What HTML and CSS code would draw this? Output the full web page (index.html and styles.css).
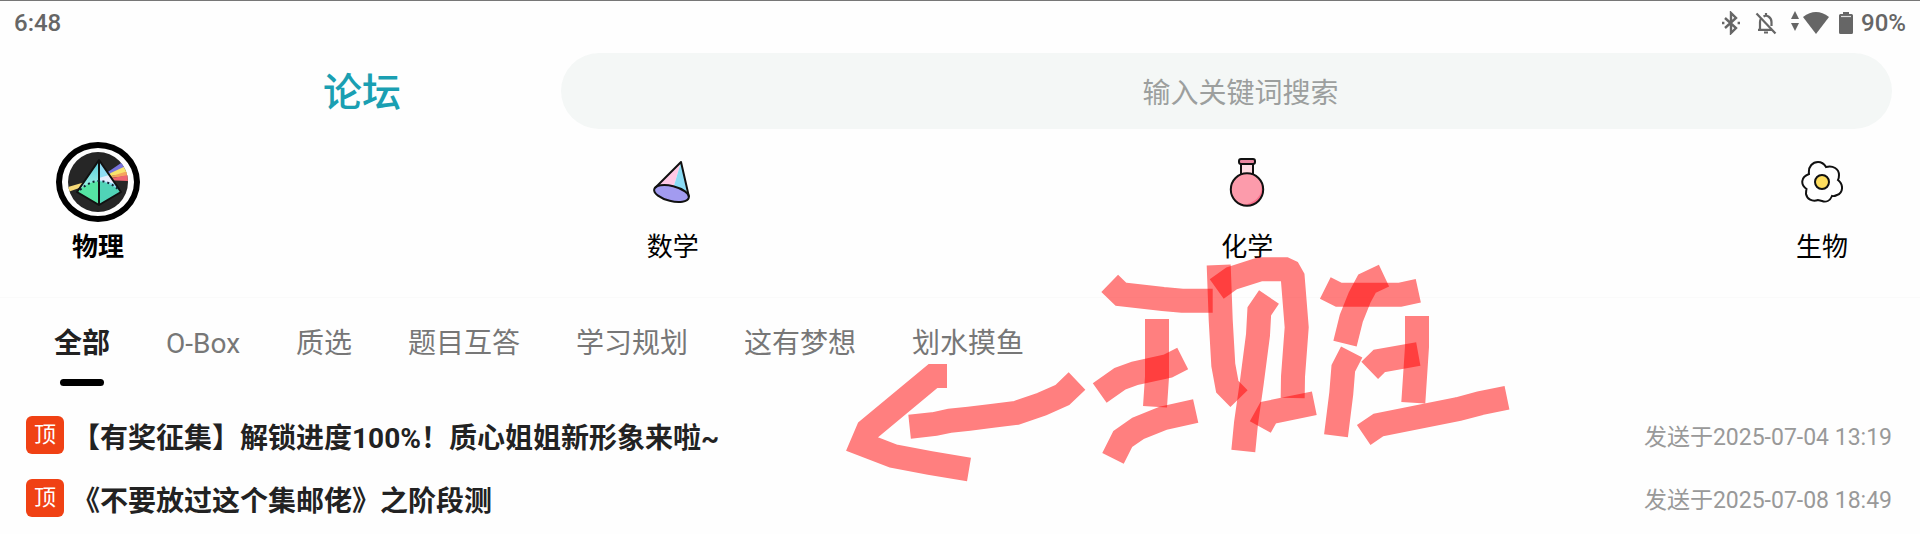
FILE: index.html
```
<!DOCTYPE html>
<html lang="zh-CN">
<head>
    <meta charset="UTF-8">
    <meta name="viewport" content="width=device-width, initial-scale=1.0">
    <title>论坛</title>
    <link rel="stylesheet" href="styles.css">
</head>
<body>
    <!-- Status bar -->
    <div class="status-bar">
        <span class="clock">6:48</span>
        <div class="status-icons">
            <svg class="bluetooth" width="20" height="24" viewBox="0 0 20 24" fill="none" stroke="#666" stroke-width="2.400">
                <path d="M4 7l11 10-5 5V2l5 5L4 17"/>
                <path d="M1 12h2.400M16.600 12H19"/>
            </svg>
            <svg class="bell" width="22" height="24" viewBox="0 0 22 24" fill="none" stroke="#666" stroke-width="2.200">
                <path d="M1.500 2.500l19 20"/>
                <path d="M5 18.500V11q0-2 1-3.500M3 18.800h14M8.500 5.500Q11 4 13.500 5.500q3 1.800 3 5.500v4"/>
                <path d="M11 2v3M9 21.500h4"/>
            </svg>
            <svg class="signal" width="38" height="24" viewBox="0 0 38 24" fill="#666">
                <path d="M4 0l4 8H0zM4 20l4-8H0z"/>
                <path d="M12 6Q25 -4 38 6L25 23z"/>
            </svg>
            <svg class="battery" width="14" height="24" viewBox="0 0 14 24" fill="#666">
                <path d="M4 1h6v2h2.500Q14 3 14 4.500v17q0 1.500-1.500 1.500h-11Q0 23 0 21.500v-17Q0 3 1.500 3H4z"/>
                <path d="M2 5.500h10" stroke="#ddd" stroke-width="1.200"/>
            </svg>
            <span class="battery-level">90%</span>
        </div>
    </div>

    <!-- Title and search -->
    <header class="top">
        <h1>论坛</h1>
        <input class="search" type="text" placeholder="输入关键词搜索" aria-label="输入关键词搜索">
    </header>

    <!-- Subjects -->
    <nav class="subjects">
        <button class="subject active">
            <span class="subject-icon">
                <svg width="60" height="60" viewBox="0 0 60 60">
                    <defs>
                        <clipPath id="disc"><circle cx="30" cy="30" r="30"/></clipPath>
                        <linearGradient id="glass" x1="0" y1="0" x2="0" y2="1">
                            <stop offset="0" stop-color="#55c8d8"/>
                            <stop offset="0.600" stop-color="#9af0e4"/>
                            <stop offset="1" stop-color="#4fdfa8"/>
                        </linearGradient>
                    </defs>
                    <g clip-path="url(#disc)">
                        <rect width="60" height="60" fill="#262626"/>
                        <path d="M0 35l31-9v3L0 40z" fill="#f6d978"/>
                        <path d="M34 24L56 9l4 4v3z" fill="#7773dc"/>
                        <path d="M34 25l26-12v9z" fill="#f8e36c"/>
                        <path d="M34 27l26-8v5z" fill="#f5a45d"/>
                        <path d="M34 28l26-5v6z" fill="#ef6470"/>
                        <path d="M31 8L9 40l22 13 22-13z" fill="url(#glass)"/>
                        <path d="M31 8l22 32q-10-9-22-11z" fill="#8fdcf5"/>
                        <path d="M31 26l10-3 7 9-17-4z" fill="#e8edff"/>
                        <path d="M9 40q10-10 22-11v24z" fill="#55e4a3"/>
                        <path d="M31 29q12 2 22 11L31 53z" fill="#50d3b7"/>
                        <path d="M31 8L9 40l22 13 22-13zM31 8v45" fill="none" stroke="#111" stroke-width="2" stroke-linejoin="round"/>
                        <path d="M12 38q19-18 39 0" fill="none" stroke="#123" stroke-width="2" stroke-dasharray="2 3"/>
                    </g>
                </svg>
            </span>
            <span class="subject-name">物理</span>
        </button>
        <button class="subject">
            <span class="subject-icon">
                <svg width="46" height="48" viewBox="0 0 46 48">
                    <path d="M31 4L7 29q8 0 16 2z" fill="#ffc9e6"/>
                    <path d="M31 4l7 36-15-9z" fill="#8bdcf5"/>
                    <ellipse cx="21.500" cy="35.500" rx="17.800" ry="7.500" transform="rotate(14 21.500 35.500)" fill="#a29bf0" stroke="#111" stroke-width="2"/>
                    <path d="M5 30L31 4l8 35" fill="none" stroke="#111" stroke-width="2" stroke-linejoin="round"/>
                </svg>
            </span>
            <span class="subject-name">数学</span>
        </button>
        <button class="subject">
            <span class="subject-icon">
                <svg width="36" height="50" viewBox="0 0 36 50">
                    <path d="M12 5h12v14H12z" fill="#ffdce3" stroke="#111" stroke-width="2"/>
                    <circle cx="18" cy="32.500" r="16.200" fill="#fc9bab"/>
                    <path d="M31.500 23Q37 43 14 48q10 2 16-5 8-10 1.500-20z" fill="#f9708c"/>
                    <circle cx="18" cy="32.500" r="16.200" fill="none" stroke="#111" stroke-width="2"/>
                    <rect x="10" y="2" width="16" height="5" rx="2" fill="#e986a0" stroke="#111" stroke-width="2"/>
                </svg>
            </span>
            <span class="subject-name">化学</span>
        </button>
        <button class="subject">
            <span class="subject-icon">
                <svg width="42" height="42" viewBox="0 0 42 42" stroke="#111" stroke-width="2">
                    <path d="M8 13C7 5 12 1 17 1q5 0 8 5c7-2 13 2 13 8q0 3-1 5c6 5 5 13-1 15q-3 1.500-5 1c-2 5-6 6.500-10 5l-4-1c-6 2-11-1-12-6q0-3 .5-5C-.5 24-.5 16 8 13z" fill="#fff"/>
                    <circle cx="21" cy="21" r="7" fill="#ffde5e"/>
                </svg>
            </span>
            <span class="subject-name">生物</span>
        </button>
    </nav>

    <!-- Sections -->
    <nav class="tabs">
        <button class="tab active">全部</button>
        <button class="tab">O-Box</button>
        <button class="tab">质选</button>
        <button class="tab">题目互答</button>
        <button class="tab">学习规划</button>
        <button class="tab">这有梦想</button>
        <button class="tab">划水摸鱼</button>
    </nav>

    <!-- Pinned posts -->
    <main class="posts">
        <a class="post" href="#">
            <span class="pin">顶</span>
            <span class="post-title">【有奖征集】解锁进度100%！质心姐姐新形象来啦~</span>
            <time class="post-time">发送于2025-07-04 13:19</time>
        </a>
        <a class="post" href="#">
            <span class="pin">顶</span>
            <span class="post-title">《不要放过这个集邮佬》之阶段测</span>
            <time class="post-time">发送于2025-07-08 18:49</time>
        </a>
    </main>

    <!-- Marker strokes drawn over the page -->
    <svg class="marker" width="680" height="240" viewBox="840 250 680 240">
        <path d="M947 376H933L868 430 862 444 893 456 930 463 969 469.500"/>
        <path d="M909.600 426.700L935 424 950 420.700 969 418.700 994 415.700 1016 413 1042 404 1062.500 395 1077 381"/>
        <path d="M1109.700 283.300L1121 294.300 1163 299 1182 300.700H1212.700"/>
        <path d="M1157 319V377L1155 406.700"/>
        <path d="M1099.700 393L1120 378.700 1135 373.300 1168 366 1182.700 358.500"/>
        <path d="M1113 458.300L1122.700 439 1138 428.300 1163 418.300 1195.700 411"/>
        <path d="M1218.700 265L1220.700 320 1223.300 365 1227.300 386.700 1239 398.700"/>
        <path d="M1216.700 289L1231.700 278.300 1260 269.300H1285L1289.300 271.300 1292.700 277.300 1296.700 327.300 1293 376.700 1292.700 398"/>
        <path d="M1269 297L1259.300 311.300 1258 335 1251.700 383.300 1246 423.300 1243.300 451"/>
        <path d="M1260.300 427L1268.300 412.700 1314.300 403.300"/>
        <path d="M1325.300 288L1338.700 294.700H1400L1418.300 290.700"/>
        <path d="M1384 275.700L1367 283.700 1359.700 297.300 1351.300 318.300 1345 343.700"/>
        <path d="M1351.700 352L1343.300 368.300 1341.300 393.300 1336 435.700"/>
        <path d="M1369.700 370.300L1379.300 361 1418.300 354"/>
        <path d="M1417 316V346.700L1413.300 402.700"/>
        <path d="M1363.700 435L1378.300 425 1458.300 409 1480 403.300 1507 397.700"/>
    </svg>
</body>
</html>
```
FILE: styles.css
```
/* General styling */
* {
    box-sizing: border-box;
}
body {
    position: relative;
    margin: 0;
    border-top: 1px solid #777;
    background-color: #fefefe;
    color: #222;
    font-family: Roboto, "Noto Sans CJK SC", sans-serif;
}
button {
    padding: 0;
    border: none;
    background: none;
    font-family: inherit;
    cursor: pointer;
}
/* Status bar */
.status-bar {
    display: flex;
    justify-content: space-between;
    align-items: center;
    height: 44px;
    padding: 0 14px;
    color: #666;
    font-size: 24px;
    font-weight: 500;
}
.status-icons {
    display: flex;
    align-items: center;
}
.bell {
    margin-left: 14px;
}
.signal {
    margin-left: 14px;
}
.battery {
    margin: 0 8px 0 10px;
}
/* Title and search */
.top {
    display: grid;
    grid-template-columns: 561fr 1331fr;
    align-items: center;
    padding: 8px 28px 0 0;
}
.top h1 {
    margin: 0;
    padding: 4px 160px 0 0;
    color: #1a9fb2;
    font-size: 39px;
    font-weight: 500;
    line-height: 72px;
    text-align: right;
}
.search {
    height: 76px;
    padding: 4px 0 0 28px;
    border: none;
    border-radius: 38px;
    background-color: #f4f7f6;
    font-family: inherit;
    font-size: 28px;
    text-align: center;
    outline: none;
}
.search::placeholder {
    color: #9c9f9e;
}
/* Subjects */
.subjects {
    display: flex;
    justify-content: space-between;
    padding: 13px 56px 31px;
    border-bottom: 1px solid #fafafa;
}
.subject {
    display: flex;
    flex-direction: column;
    align-items: center;
    width: 84px;
    color: #000;
    font-size: 26px;
}
.subject-icon {
    display: flex;
    justify-content: center;
    align-items: center;
    width: 84px;
    height: 80px;
}
.subject-name {
    padding-top: 6px;
    line-height: 38px;
}
.subject.active .subject-icon {
    border: 6px solid #000;
    border-radius: 50%;
}
.subject.active .subject-name {
    font-weight: bold;
}
/* Sections */
.tabs {
    display: flex;
    gap: 56px;
    padding: 26px 54px 0;
}
.tab {
    display: flex;
    flex-direction: column;
    align-items: center;
    color: #777;
    font-size: 28px;
    line-height: 40px;
}
.tab.active {
    color: #222;
    font-weight: bold;
}
.tab.active::after {
    content: "";
    width: 44px;
    height: 7px;
    margin-top: 15px;
    border-radius: 4px;
    background-color: #000;
}
/* Posts */
.posts {
    padding: 17px 28px 0 26px;
}
.post {
    display: flex;
    align-items: center;
    height: 63px;
    color: #222;
    text-decoration: none;
}
.pin {
    width: 38px;
    height: 38px;
    border-radius: 6px;
    background-color: #f04114;
    color: #fff;
    font-size: 22px;
    line-height: 38px;
    text-align: center;
}
.post-title {
    flex: 1;
    padding: 2px 0 0 8px;
    font-size: 28px;
    font-weight: bold;
}
.post-time {
    color: #999;
    font-size: 23px;
}
/* Marker strokes */
.marker {
    position: absolute;
    top: 249px;
    left: 43.75%;
    fill: none;
    stroke: rgba(255, 0, 0, 0.5);
    stroke-width: 24;
    pointer-events: none;
}
```
